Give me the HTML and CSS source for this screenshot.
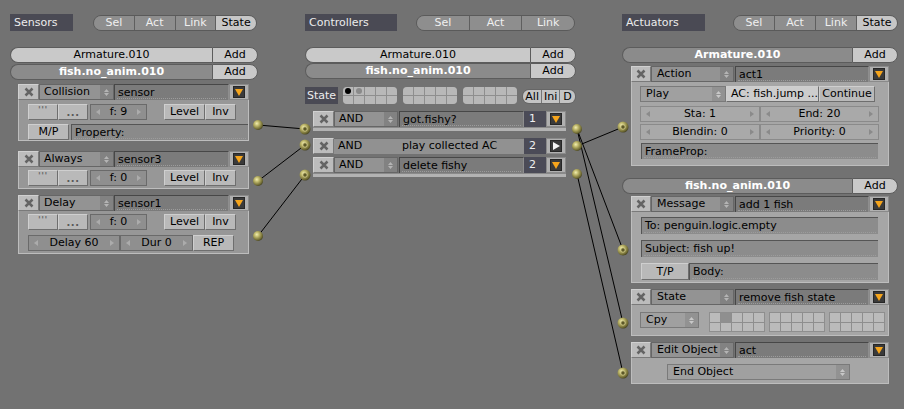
FILE: index.html
```html
<!DOCTYPE html>
<html>
<head>
<meta charset="utf-8">
<link rel="stylesheet" href="styles.css">
</head>
<body>
<div class="page">

  <!-- SENSORS -->
  <div class="col col-sens">
    <div class="hdr">
      <div class="lbl lbl-sens">Sensors</div>
      <div class="tgl tgl-sens"><span>Sel</span><span>Act</span><span>Link</span><span class="on">State</span></div>
    </div>
    <div class="obj obj-top"><span class="nm">Armature.010</span><span class="add">Add</span></div>
    <div class="obj obj-dark mt1"><span class="nm">fish.no_anim.010</span><span class="add">Add</span></div>

    <div class="brick sbrick s1">
      <div class="bh">
        <span class="x"><svg width="10" height="10" viewBox="0 0 10 10"><path d="M1.5 1.5L8.5 8.5M8.5 1.5L1.5 8.5"/></svg></span>
        <span class="menu mw-s">Collision<span class="updn"><svg width="7" height="9" viewBox="0 0 7 9"><path d="M1 4L3.5 1L6 4ZM1 5L3.5 8L6 5Z"/></svg></span></span>
        <span class="name">sensor</span>
        <span class="arr"><span class="arr-i"><svg width="8" height="7" viewBox="0 0 8 7"><path d="M0 0H8L4 7Z"/></svg></span></span>
      </div>
      <div class="bb sb-body pb0">
        <div class="row">
          <span class="btn lt w30 tick">'''</span>
          <span class="btn lt w30 dots">...</span>
          <span class="num w57 ml2"><i class="la"></i>f: 9<i class="ra"></i></span>
          <span class="btn lt w41 ml17">Level</span>
          <span class="btn lt w31">Inv</span>
        </div>
        <div class="row mt4">
          <span class="btn lt w41">M/P</span>
          <span class="field grow ml2">Property:</span>
        </div>
      </div>
    </div>

    <div class="brick sbrick s2">
      <div class="bh">
        <span class="x"><svg width="10" height="10" viewBox="0 0 10 10"><path d="M1.5 1.5L8.5 8.5M8.5 1.5L1.5 8.5"/></svg></span>
        <span class="menu mw-s">Always<span class="updn"><svg width="7" height="9" viewBox="0 0 7 9"><path d="M1 4L3.5 1L6 4ZM1 5L3.5 8L6 5Z"/></svg></span></span>
        <span class="name">sensor3</span>
        <span class="arr"><span class="arr-i"><svg width="8" height="7" viewBox="0 0 8 7"><path d="M0 0H8L4 7Z"/></svg></span></span>
      </div>
      <div class="bb sb-body pb2">
        <div class="row">
          <span class="btn lt w30 tick">'''</span>
          <span class="btn lt w30 dots">...</span>
          <span class="num w57 ml2"><i class="la"></i>f: 0<i class="ra"></i></span>
          <span class="btn lt w41 ml17">Level</span>
          <span class="btn lt w31">Inv</span>
        </div>
      </div>
    </div>

    <div class="brick sbrick s3">
      <div class="bh">
        <span class="x"><svg width="10" height="10" viewBox="0 0 10 10"><path d="M1.5 1.5L8.5 8.5M8.5 1.5L1.5 8.5"/></svg></span>
        <span class="menu mw-s">Delay<span class="updn"><svg width="7" height="9" viewBox="0 0 7 9"><path d="M1 4L3.5 1L6 4ZM1 5L3.5 8L6 5Z"/></svg></span></span>
        <span class="name">sensor1</span>
        <span class="arr"><span class="arr-i"><svg width="8" height="7" viewBox="0 0 8 7"><path d="M0 0H8L4 7Z"/></svg></span></span>
      </div>
      <div class="bb sb-body pb2">
        <div class="row">
          <span class="btn lt w30 tick">'''</span>
          <span class="btn lt w30 dots">...</span>
          <span class="num w57 ml2"><i class="la"></i>f: 0<i class="ra"></i></span>
          <span class="btn lt w41 ml17">Level</span>
          <span class="btn lt w31">Inv</span>
        </div>
        <div class="row mt5">
          <span class="num w92"><i class="la"></i>Delay 60<i class="ra"></i></span>
          <span class="num w73"><i class="la"></i>Dur 0<i class="ra"></i></span>
          <span class="btn lt w41">REP</span>
        </div>
      </div>
    </div>
  </div>

  <!-- CONTROLLERS -->
  <div class="col col-ctrl">
    <div class="hdr">
      <div class="lbl lbl-ctrl">Controllers</div>
      <div class="tgl tgl-ctrl"><span>Sel</span><span>Act</span><span>Link</span></div>
    </div>
    <div class="obj obj-top"><span class="nm">Armature.010</span><span class="add">Add</span></div>
    <div class="obj obj-dark"><span class="nm">fish.no_anim.010</span><span class="add">Add</span></div>

    <div class="state-row">
      <span class="lbl lbl-state">State</span>
      <div class="sgrid g1">
        <span class="c"><i class="dot-b"></i></span><span class="c"><i class="dot-g"></i></span><span class="c"></span><span class="c"></span><span class="c"></span>
        <span class="c"></span><span class="c"></span><span class="c"></span><span class="c"></span><span class="c"></span>
      </div>
      <div class="sgrid">
        <span class="c"></span><span class="c"></span><span class="c"></span><span class="c"></span><span class="c"></span>
        <span class="c"></span><span class="c"></span><span class="c"></span><span class="c"></span><span class="c"></span>
      </div>
      <div class="sgrid">
        <span class="c"></span><span class="c"></span><span class="c"></span><span class="c"></span><span class="c"></span>
        <span class="c"></span><span class="c"></span><span class="c"></span><span class="c"></span><span class="c"></span>
      </div>
      <div class="aid"><span>All</span><span>Ini</span><span>D</span></div>
    </div>

    <div class="brick cbrick c1">
      <div class="bh">
        <span class="x"><svg width="10" height="10" viewBox="0 0 10 10"><path d="M1.5 1.5L8.5 8.5M8.5 1.5L1.5 8.5"/></svg></span>
        <span class="menu mw-c">AND<span class="updn"><svg width="7" height="9" viewBox="0 0 7 9"><path d="M1 4L3.5 1L6 4ZM1 5L3.5 8L6 5Z"/></svg></span></span>
        <span class="name ml1">got.fishy?</span>
        <span class="cnum">1</span>
        <span class="arr"><span class="arr-i"><svg width="8" height="7" viewBox="0 0 8 7"><path d="M0 0H8L4 7Z"/></svg></span></span>
      </div>
      <div class="strip"></div>
    </div>

    <div class="brick cbrick c2">
      <div class="bh">
        <span class="x"><svg width="10" height="10" viewBox="0 0 10 10"><path d="M1.5 1.5L8.5 8.5M8.5 1.5L1.5 8.5"/></svg></span>
        <span class="collapsed"><span class="ct">AND</span><span>play collected AC</span></span>
        <span class="cnum">2</span>
        <span class="arr"><span class="arr-i"><svg width="7" height="8" viewBox="0 0 7 8"><path d="M0 0L7 4L0 8Z" fill="#f4f4f4"/></svg></span></span>
      </div>
    </div>

    <div class="brick cbrick c3">
      <div class="bh">
        <span class="x"><svg width="10" height="10" viewBox="0 0 10 10"><path d="M1.5 1.5L8.5 8.5M8.5 1.5L1.5 8.5"/></svg></span>
        <span class="menu mw-c">AND<span class="updn"><svg width="7" height="9" viewBox="0 0 7 9"><path d="M1 4L3.5 1L6 4ZM1 5L3.5 8L6 5Z"/></svg></span></span>
        <span class="name ml1">delete fishy</span>
        <span class="cnum">2</span>
        <span class="arr"><span class="arr-i"><svg width="8" height="7" viewBox="0 0 8 7"><path d="M0 0H8L4 7Z"/></svg></span></span>
      </div>
      <div class="strip"></div>
    </div>
  </div>

  <!-- ACTUATORS -->
  <div class="col col-act">
    <div class="hdr">
      <div class="lbl lbl-act">Actuators</div>
      <div class="tgl tgl-act"><span>Sel</span><span>Act</span><span>Link</span><span class="on">State</span></div>
    </div>
    <div class="obj obj-dark"><span class="nm">Armature.010</span><span class="add">Add</span></div>

    <div class="brick abrick a1">
      <div class="bh">
        <span class="x"><svg width="10" height="10" viewBox="0 0 10 10"><path d="M1.5 1.5L8.5 8.5M8.5 1.5L1.5 8.5"/></svg></span>
        <span class="menu mw-a">Action<span class="updn"><svg width="7" height="9" viewBox="0 0 7 9"><path d="M1 4L3.5 1L6 4ZM1 5L3.5 8L6 5Z"/></svg></span></span>
        <span class="name ml1">act1</span>
        <span class="arr"><span class="arr-i"><svg width="8" height="7" viewBox="0 0 8 7"><path d="M0 0H8L4 7Z"/></svg></span></span>
      </div>
      <div class="bb ab-body act-body">
        <div class="row">
          <span class="menu amenu w86">Play<span class="updn"><svg width="7" height="9" viewBox="0 0 7 9"><path d="M1 4L3.5 1L6 4ZM1 5L3.5 8L6 5Z"/></svg></span></span>
          <span class="btn pale w93 tl">AC: fish.jump ...</span>
          <span class="btn lt w56">Continue</span>
        </div>
        <div class="row mt4">
          <span class="num anum w120"><i class="la"></i>Sta: 1<i class="ra"></i></span>
          <span class="num anum w119"><i class="la"></i>End: 20<i class="ra"></i></span>
        </div>
        <div class="row mt2">
          <span class="num anum w120"><i class="la"></i>Blendin: 0<i class="ra"></i></span>
          <span class="num anum w119"><i class="la"></i>Priority: 0<i class="ra"></i></span>
        </div>
        <div class="row mt3">
          <span class="field afield w237 ml1">FrameProp:</span>
        </div>
      </div>
    </div>

    <div class="obj obj-dark mt12"><span class="nm">fish.no_anim.010</span><span class="add">Add</span></div>

    <div class="brick abrick a2">
      <div class="bh">
        <span class="x"><svg width="10" height="10" viewBox="0 0 10 10"><path d="M1.5 1.5L8.5 8.5M8.5 1.5L1.5 8.5"/></svg></span>
        <span class="menu mw-a">Message<span class="updn"><svg width="7" height="9" viewBox="0 0 7 9"><path d="M1 4L3.5 1L6 4ZM1 5L3.5 8L6 5Z"/></svg></span></span>
        <span class="name ml1">add 1 fish</span>
        <span class="arr"><span class="arr-i"><svg width="8" height="7" viewBox="0 0 8 7"><path d="M0 0H8L4 7Z"/></svg></span></span>
      </div>
      <div class="bb ab-body msg-body">
        <div class="row h17">
          <span class="field afield w237 ml1">To: penguin.logic.empty</span>
        </div>
        <div class="row h17 mt6">
          <span class="field afield w237 ml1">Subject: fish up!</span>
        </div>
        <div class="row h17 mt6">
          <span class="btn lt w48 ml1">T/P</span>
          <span class="field afield w189">Body:</span>
        </div>
      </div>
    </div>

    <div class="brick abrick a3">
      <div class="bh">
        <span class="x"><svg width="10" height="10" viewBox="0 0 10 10"><path d="M1.5 1.5L8.5 8.5M8.5 1.5L1.5 8.5"/></svg></span>
        <span class="menu mw-a">State<span class="updn"><svg width="7" height="9" viewBox="0 0 7 9"><path d="M1 4L3.5 1L6 4ZM1 5L3.5 8L6 5Z"/></svg></span></span>
        <span class="name ml1">remove fish state</span>
        <span class="arr"><span class="arr-i"><svg width="8" height="7" viewBox="0 0 8 7"><path d="M0 0H8L4 7Z"/></svg></span></span>
      </div>
      <div class="bb ab-body st-body">
        <div class="row h20">
          <span class="menu amenu w59 cpy">Cpy<span class="updn"><svg width="7" height="9" viewBox="0 0 7 9"><path d="M1 4L3.5 1L6 4ZM1 5L3.5 8L6 5Z"/></svg></span></span>
          <div class="agrid ml10">
            <span class="c"></span><span class="c sel"></span><span class="c"></span><span class="c"></span><span class="c"></span>
            <span class="c"></span><span class="c"></span><span class="c"></span><span class="c"></span><span class="c"></span>
          </div>
          <div class="agrid ml4">
            <span class="c"></span><span class="c"></span><span class="c"></span><span class="c"></span><span class="c"></span>
            <span class="c"></span><span class="c"></span><span class="c"></span><span class="c"></span><span class="c"></span>
          </div>
          <div class="agrid ml4">
            <span class="c"></span><span class="c"></span><span class="c"></span><span class="c"></span><span class="c"></span>
            <span class="c"></span><span class="c"></span><span class="c"></span><span class="c"></span><span class="c"></span>
          </div>
        </div>
      </div>
    </div>

    <div class="brick abrick a4">
      <div class="bh">
        <span class="x"><svg width="10" height="10" viewBox="0 0 10 10"><path d="M1.5 1.5L8.5 8.5M8.5 1.5L1.5 8.5"/></svg></span>
        <span class="menu mw-a">Edit Object<span class="updn"><svg width="7" height="9" viewBox="0 0 7 9"><path d="M1 4L3.5 1L6 4ZM1 5L3.5 8L6 5Z"/></svg></span></span>
        <span class="name ml1">act</span>
        <span class="arr"><span class="arr-i"><svg width="8" height="7" viewBox="0 0 8 7"><path d="M0 0H8L4 7Z"/></svg></span></span>
      </div>
      <div class="bb ab-body eo-body">
        <div class="row h17">
          <span class="menu amenu w183 ml27">End Object<span class="updn"><svg width="7" height="9" viewBox="0 0 7 9"><path d="M1 4L3.5 1L6 4ZM1 5L3.5 8L6 5Z"/></svg></span></span>
        </div>
      </div>
    </div>
  </div>
</div>

<!-- wires and connectors (diagram overlay) -->
<svg class="wires" width="904" height="409" viewBox="0 0 904 409">
  <defs>
    <radialGradient id="ball" cx="0.38" cy="0.35" r="0.7">
      <stop offset="0" stop-color="#f2eeb0"/>
      <stop offset="0.35" stop-color="#bdb66a"/>
      <stop offset="0.8" stop-color="#6f6a34"/>
      <stop offset="1" stop-color="#3e3b1c"/>
    </radialGradient>
  </defs>
  <g stroke="#000" stroke-width="1" fill="none">
    <path d="M258 125L305 129"/>
    <path d="M258 181L305 145"/>
    <path d="M258 236L305 175"/>
    <path d="M577 146L623 127"/>
    <path d="M577 129L623 250"/>
    <path d="M577 129L623 323"/>
    <path d="M577 174L623 373"/>
  </g>
  <g fill="url(#ball)">
    <circle cx="258" cy="125" r="5"/>
    <circle cx="258" cy="181" r="5"/>
    <circle cx="258" cy="236" r="5"/>
    <circle cx="577" cy="129" r="5"/>
    <circle cx="577" cy="146" r="5"/>
    <circle cx="577" cy="174" r="5"/>
  </g>
  <g>
    <circle cx="305" cy="129" r="5.5" fill="url(#ball)"/>
    <circle cx="305" cy="145" r="5.5" fill="url(#ball)"/>
    <circle cx="305" cy="175" r="5.5" fill="url(#ball)"/>
    <circle cx="623" cy="127" r="5.5" fill="url(#ball)"/>
    <circle cx="623" cy="250" r="5.5" fill="url(#ball)"/>
    <circle cx="623" cy="323" r="5.5" fill="url(#ball)"/>
    <circle cx="623" cy="373" r="5.5" fill="url(#ball)"/>
  </g>
  <g fill="#5c5828" stroke="#d8d290" stroke-width="0.8">
    <circle cx="305" cy="129" r="2.2"/>
    <circle cx="305" cy="145" r="2.2"/>
    <circle cx="305" cy="175" r="2.2"/>
    <circle cx="623" cy="127" r="2.2"/>
    <circle cx="623" cy="250" r="2.2"/>
    <circle cx="623" cy="323" r="2.2"/>
    <circle cx="623" cy="373" r="2.2"/>
  </g>
</svg>
</body>
</html>
```

FILE: styles.css
```css
* { box-sizing: border-box; }

html, body {
  margin: 0;
  padding: 0;
}

body {
  width: 904px;
  height: 409px;
  background: #727272;
  font-family: "DejaVu Sans", "Liberation Sans", sans-serif;
  font-size: 11px;
  color: #000;
  overflow: hidden;
  position: relative;
}

.page {
  display: flex;
  padding-left: 10px;
  padding-top: 14px;
}

.col { display: flex; flex-direction: column; }
.col-sens { width: 248px; }
.col-ctrl { width: 271px; margin-left: 47px; }
.col-act  { width: 276px; margin-left: 46px; }

/* ---------- header row ---------- */
.hdr { display: flex; height: 17px; align-items: flex-start; }

.lbl {
  background: #4a4a54;
  color: #ececec;
  height: 17px;
  line-height: 17px;
  padding-left: 4px;
  white-space: nowrap;
}
.lbl-sens { width: 63px; }
.lbl-ctrl { width: 92px; }
.lbl-act  { width: 83px; }

.tgl {
  display: flex;
  height: 16px;
  margin-top: 1px;
  border-radius: 8px;
  overflow: hidden;
  border: 1px solid #5a5a5a;
}
.tgl span {
  flex: 1;
  text-align: center;
  line-height: 14px;
  background: #8e8e8e;
  color: #f0f0f0;
  border-left: 1px solid #5f5f5f;
}
.tgl span:first-child { border-left: 0; }
.tgl span.on { background: #c6c6c6; color: #000; }
.tgl-sens { width: 164px; margin-left: 20px; }
.tgl-ctrl { width: 159px; margin-left: 19px; }
.tgl-act  { width: 165px; margin-left: 28px; }

/* ---------- object rows ---------- */
.obj {
  display: flex;
  height: 16px;
  margin-top: 16px;
}
.obj + .obj { margin-top: 0; }
.obj .nm {
  flex: 1;
  text-align: center;
  line-height: 14px;
  border: 1px solid #5c5c5c;
  border-right: 0;
  border-radius: 8px 0 0 8px;
  background: #c9c9c9;
}
.obj .add {
  width: 46px;
  text-align: center;
  line-height: 14px;
  background: #c9c9c9;
  border: 1px solid #5c5c5c;
  border-radius: 0 8px 8px 0;
}
.obj-dark .nm {
  background: #8b8b8b;
  color: #fff;
  font-weight: bold;
}
.obj.mt1 { margin-top: 1px; }
.obj.mt12 { margin-top: 12px; }

/* ---------- bricks ---------- */
.brick { display: flex; flex-direction: column; }
.sbrick { margin-left: 8px; width: 231px; }
.cbrick { margin-left: 8px; width: 253px; }
.abrick { margin-left: 9px; width: 258px; }

.s1 { margin-top: 4px; }
.s2 { margin-top: 10px; }
.s3 { margin-top: 6px; }
.c1 { margin-top: 7px; }
.c2 { margin-top: 7px; }
.c3 { margin-top: 3px; }
.a1 { margin-top: 3px; }
.a2 { margin-top: 2px; }
.a3 { margin-top: 6px; }
.a4 { margin-top: 6px; }

.bh { display: flex; height: 16px; }

.x {
  width: 20px;
  height: 16px;
  background: #bcbcbc;
  border: 1px solid #7a7a7a;
  border-top-color: #d0d0d0;
  border-left-color: #d0d0d0;
  display: flex;
  align-items: center;
  justify-content: center;
}
.sbrick .x, .cbrick .x { width: 21px; }
.x svg path { stroke: #646464; stroke-width: 2.5; fill: none; }

.menu {
  position: relative;
  height: 16px;
  line-height: 14px;
  background: #939393;
  border: 1px solid #666;
  padding-left: 4px;
  white-space: nowrap;
  overflow: hidden;
}
.mw-s { width: 75px; }
.mw-c { width: 64px; padding-left: 4px; }
.mw-a { width: 83px; padding-left: 5px; }

.updn {
  position: absolute;
  right: 0;
  top: 0;
  bottom: 0;
  width: 13px;
  background: #828282;
  display: flex;
  align-items: center;
  justify-content: center;
}
.updn svg path { fill: #b4b4b4; }

.name {
  position: relative;
  flex: 1;
  height: 16px;
  line-height: 15px;
  background: #7b7b7b;
  border-top: 1px solid #474747;
  border-left: 1px solid #474747;
  border-right: 1px solid #8e8e8e;
  padding-left: 3px;
  white-space: nowrap;
}
.name::after, .field::after {
  content: "";
  position: absolute;
  left: 2px;
  right: 2px;
  bottom: 1px;
  border-bottom: 1px dotted #9c9c9c;
}
.ml1 { margin-left: 1px; }

.arr {
  width: 20px;
  height: 16px;
  background: #b0b0b0;
  border: 1px solid #8a8a8a;
  display: flex;
  align-items: center;
  justify-content: center;
}
.arr-i {
  width: 12px;
  height: 12px;
  background: #3a3a3a;
  border: 1px solid #262626;
  display: flex;
  align-items: center;
  justify-content: center;
}
.arr-i svg path { fill: #f6a51c; }
.c2 .arr-i svg path { fill: #f4f4f4; }

.cnum {
  width: 22px;
  height: 16px;
  line-height: 16px;
  background: #4b4b57;
  color: #f0f0f0;
  padding-left: 5px;
}
.collapsed {
  display: flex;
  width: 190px;
  height: 16px;
  background: #919191;
  border-top: 1px solid #6c6c6c;
  line-height: 14px;
}
.collapsed .ct { width: 68px; padding-left: 4px; }

.strip {
  height: 4px;
  background: #b3b3b3;
  border-top: 1px solid #8a8a8a;
}

/* body */
.bb {
  display: flex;
  flex-direction: column;
  border: 1px solid #bdbdbd;
  border-top: 0;
}
.sb-body {
  background: #979797;
  padding: 4px 0 0 9px;
}
.sb-body.pb0 { padding-top: 4px; padding-bottom: 0; height: 41px; }
.s2 .sb-body { padding-top: 3px; height: 22px; }
.s3 .sb-body { padding-top: 3px; height: 43px; }

.ab-body {
  background: #a6a6a6;
  padding-left: 8px;
}
.act-body { padding-top: 4px; height: 84px; }
.msg-body { padding-top: 5px; height: 71px; }
.st-body  { padding-top: 7px; height: 31px; }
.eo-body  { padding-top: 6px; height: 26px; }

.row { display: flex; height: 16px; align-items: flex-start; }
.row.h17 { height: 17px; }
.row.h20 { height: 20px; }
.mt2 { margin-top: 2px; }
.mt3 { margin-top: 3px; }
.mt4 { margin-top: 4px; }
.mt5 { margin-top: 5px; }
.mt6 { margin-top: 6px; }
.ml2 { margin-left: 2px; }
.ml4 { margin-left: 4px; }
.ml10 { margin-left: 10px; }
.ml17 { margin-left: 17px; }
.ml27 { margin-left: 27px; }
.grow { flex: 1; }

.btn {
  height: 16px;
  line-height: 14px;
  text-align: center;
  border: 1px solid #6e6e6e;
  border-top-color: #cfcfcf;
  border-left-color: #cfcfcf;
  white-space: nowrap;
  overflow: hidden;
}
.row.h17 .btn { height: 17px; line-height: 15px; }
.btn.lt { background: #b9b9b9; }
.btn.pale { background: #cdcdcd; }
.btn.tl { text-align: left; padding-left: 4px; }
.btn.tick { font-size: 9px; line-height: 10px; letter-spacing: 0.5px; color: #6a6a6a; font-weight: bold; }
.btn.dots { font-size: 10px; line-height: 16px; color: #5a5a5a; font-weight: bold; letter-spacing: 0.5px; }

.w30 { width: 30px; }
.w31 { width: 31px; }
.w41 { width: 41px; }
.w48 { width: 48px; }
.w56 { width: 56px; }
.w57 { width: 57px; }
.w59 { width: 59px; }
.w73 { width: 73px; }
.w86 { width: 86px; }
.w92 { width: 92px; }
.w93 { width: 93px; }
.w119 { width: 119px; }
.w120 { width: 120px; }
.w183 { width: 183px; }
.w189 { width: 189px; }
.w237 { width: 237px; }

.num {
  position: relative;
  height: 16px;
  line-height: 14px;
  text-align: center;
  background: #8f8f8f;
  border: 1px solid #6a6a6a;
  white-space: nowrap;
}
.num .la, .num .ra {
  position: absolute;
  top: 4px;
  width: 0;
  height: 0;
  border-top: 3px solid transparent;
  border-bottom: 3px solid transparent;
}
.num .la { left: 5px; border-right: 4px solid #acacac; }
.num .ra { right: 5px; border-left: 4px solid #acacac; }
.num.anum { background: #a9a9a9; border-color: #8a8a8a; }
.num.anum .la { border-right-color: #8a8a8a; }
.num.anum .ra { border-left-color: #8a8a8a; }

.field {
  position: relative;
  height: 16px;
  line-height: 15px;
  background: #8a8a8a;
  border-top: 1px solid #555;
  border-left: 1px solid #555;
  padding-left: 3px;
  white-space: nowrap;
}
.row.h17 .field { height: 17px; line-height: 16px; }
.field.afield { background: #8c8c8c; }

.amenu {
  background: #a0a0a0;
  border-color: #7a7a7a;
  padding-left: 5px;
}
.amenu .updn { background: #929292; }
.amenu .updn svg path { fill: #c8c8c8; }
.cpy { height: 16px; }

/* state grid (controllers) */
.state-row {
  display: flex;
  height: 17px;
  margin-top: 8px;
  align-items: flex-start;
}
.lbl-state { width: 33px; padding-left: 2px; }
.sgrid {
  width: 54px;
  height: 17px;
  display: grid;
  grid-template-columns: repeat(5, 1fr);
  grid-template-rows: repeat(2, 1fr);
  gap: 1px;
  background: #8e8e8e;
  border-radius: 4px;
  overflow: hidden;
  margin-left: 6px;
}
.sgrid.g1 { margin-left: 5px; }
.sgrid .c { background: #b8b8b8; position: relative; }
.dot-b, .dot-g {
  position: absolute;
  left: 2px;
  top: 1px;
  width: 6px;
  height: 6px;
  border-radius: 50%;
}
.dot-b { background: #000; }
.dot-g { background: #8a8a8a; }

.aid {
  display: flex;
  width: 54px;
  height: 15px;
  margin-top: 2px;
  margin-left: 5px;
  border: 1px solid #666;
  border-radius: 7px;
  overflow: hidden;
}
.aid span {
  flex: 1;
  text-align: center;
  line-height: 13px;
  background: #c4c4c4;
  border-left: 1px solid #777;
}
.aid span:first-child { border-left: 0; flex: 1.1; }
.aid span:last-child { flex: 0.9; }

/* state grid (actuator) */
.agrid {
  width: 56px;
  height: 20px;
  display: grid;
  grid-template-columns: repeat(5, 1fr);
  grid-template-rows: repeat(2, 1fr);
  gap: 1px;
  background: #8e8e8e;
  border: 1px solid #8e8e8e;
}
.agrid .c { background: #bbbbbb; }
.agrid .c.sel { background: #8f8f8f; }

/* diagram overlay */
.wires {
  position: absolute;
  left: 0;
  top: 0;
  pointer-events: none;
}
```
